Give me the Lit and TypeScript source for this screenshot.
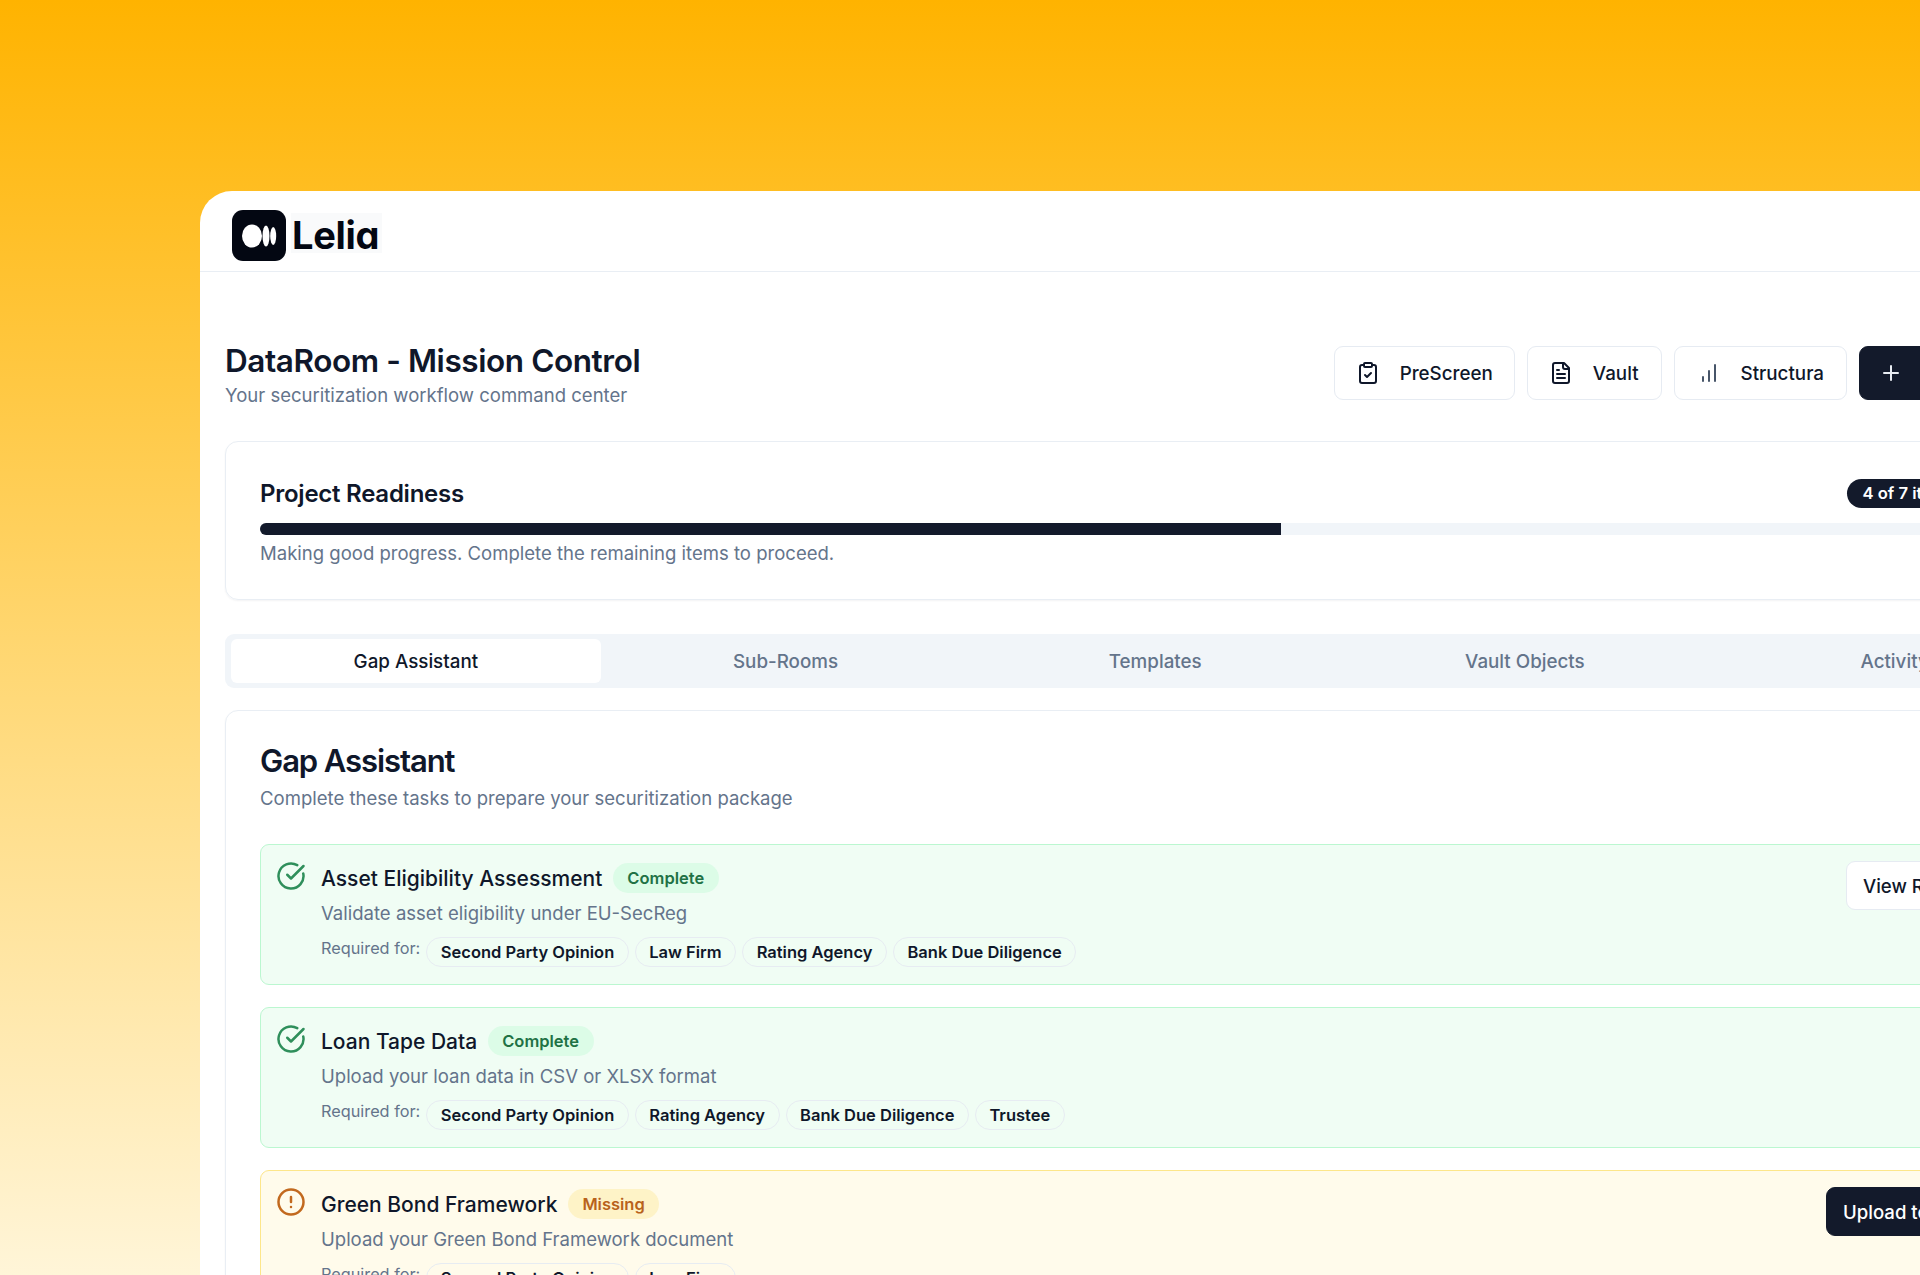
import { LitElement, html, css, svg } from 'lit';
import { customElement } from 'lit/decorators.js';

type Task = {
  title: string;
  desc: string;
  status: 'complete' | 'missing';
  required: string[];
  action: string;
};

const TASKS: Task[] = [
  {
    title: 'Asset Eligibility Assessment',
    desc: 'Validate asset eligibility under EU-SecReg',
    status: 'complete',
    required: ['Second Party Opinion', 'Law Firm', 'Rating Agency', 'Bank Due Diligence'],
    action: 'View Results',
  },
  {
    title: 'Loan Tape Data',
    desc: 'Upload your loan data in CSV or XLSX format',
    status: 'complete',
    required: ['Second Party Opinion', 'Rating Agency', 'Bank Due Diligence', 'Trustee'],
    action: '',
  },
  {
    title: 'Green Bond Framework',
    desc: 'Upload your Green Bond Framework document',
    status: 'missing',
    required: ['Second Party Opinion', 'Law Firm'],
    action: 'Upload to DataRoom',
  },
];

const TABS = ['Gap Assistant', 'Sub-Rooms', 'Templates', 'Vault Objects', 'Activity'];

const icon = (body: unknown) => html`
  <svg class="icon" viewBox="0 0 24 24" fill="none" stroke="currentColor" stroke-width="2"
    stroke-linecap="round" stroke-linejoin="round">${body}</svg>
`;

const clipboardCheck = svg`
  <rect x="8" y="2" width="8" height="4" rx="1"></rect>
  <path d="M16 4h2a2 2 0 0 1 2 2v14a2 2 0 0 1-2 2H6a2 2 0 0 1-2-2V6a2 2 0 0 1 2-2h2"></path>
  <path d="m9 14 2 2 4-4"></path>`;
const fileText = svg`
  <path d="M15 2H6a2 2 0 0 0-2 2v16a2 2 0 0 0 2 2h12a2 2 0 0 0 2-2V7Z"></path>
  <path d="M14 2v4a2 2 0 0 0 2 2h4"></path>
  <path d="M10 9H8"></path><path d="M16 13H8"></path><path d="M16 17H8"></path>`;
const barChart = svg`
  <line x1="18" x2="18" y1="20" y2="4"></line>
  <line x1="12" x2="12" y1="20" y2="10"></line>
  <line x1="6" x2="6" y1="20" y2="16"></line>`;
const plus = svg`<path d="M5 12h14"></path><path d="M12 5v14"></path>`;
const circleCheck = svg`
  <path d="M21.801 10A10 10 0 1 1 17 3.335"></path><path d="m9 11 3 3L22 4"></path>`;
const circleAlert = svg`
  <circle cx="12" cy="12" r="10"></circle>
  <line x1="12" x2="12" y1="8" y2="12"></line>
  <line x1="12" x2="12.01" y1="16" y2="16"></line>`;

@customElement('app-root')
export class AppRoot extends LitElement {
  static styles = css`
    :host {
      display: block;
      width: 1920px;
      height: 1275px;
      overflow: hidden;
      padding: 191px 0 0 200px;
      box-sizing: border-box;
      background: linear-gradient(180deg, #ffb300 0%, #ffd66f 50%, #fff5d8 100%);
      font-family: Inter, 'Noto Sans', sans-serif;
      color: #0f172a;
    }

    .window {
      width: 1906px;
      height: 1084px;
      overflow: hidden;
      background: #fff;
      border-radius: 32px 0 0 0;
    }

    .topbar {
      height: 81px;
      box-sizing: border-box;
      border-bottom: 1px solid #e9eef4;
      padding: 19px 0 0 32px;
      display: flex;
      gap: 5px;
    }

    .logo-mark {
      width: 54px;
      height: 51px;
      display: block;
    }

    .logo-word {
      margin-top: 3px;
      height: 40px;
      padding: 0 3px 0 1px;
      background: #f9fafb;
      font-size: 38px;
      line-height: 44px;
      font-weight: 700;
      letter-spacing: -0.3px;
      color: #030712;
      font-feature-settings: 'cv11' 1;
    }

    main {
      padding: 71px 25px 0;
    }

    .page-head {
      display: flex;
      justify-content: space-between;
      align-items: center;
    }

    h1 {
      margin: 0;
      font-size: 31.5px;
      line-height: 36px;
      font-weight: 600;
      letter-spacing: -0.42px;
    }

    .muted {
      color: #64748b;
      font-size: 18.55px;
      line-height: 26px;
    }

    .page-head .muted {
      margin-top: 3px;
    }

    .head-actions {
      display: flex;
      gap: 12px;
      margin-bottom: 5px;
    }

    .btn {
      display: flex;
      align-items: center;
      box-sizing: border-box;
      height: 54px;
      padding: 0 22px 0 21px;
      gap: 20px;
      background: #fff;
      border: 1px solid #e6ebf2;
      border-radius: 9px;
      font: inherit;
      font-size: 18.8px;
      font-weight: 500;
      color: #0f172a;
      white-space: nowrap;
    }

    .btn .icon {
      width: 24px;
      height: 24px;
      flex: none;
    }

    .btn.screen {
      padding-right: 21px;
    }

    .btn.chart {
      padding-left: 22px;
    }

    .btn.chart .icon {
      color: #475569;
    }

    .btn.dark {
      width: 222px;
      padding-left: 19px;
      background: #131a2b;
      border-color: #131a2b;
      color: #e8ecf2;
    }

    .card {
      border: 1px solid #e9eef4;
      border-radius: 13px;
      box-shadow: 0 1px 2px rgba(15, 23, 42, 0.05);
      padding: 34px;
    }

    .readiness {
      margin-top: 33px;
      height: 159px;
      box-sizing: border-box;
    }

    .readiness-head {
      display: flex;
      justify-content: space-between;
      align-items: center;
      height: 34px;
    }

    h2 {
      margin: 0;
      font-size: 24px;
      font-weight: 600;
      letter-spacing: -0.25px;
    }

    .count {
      background: #131a2b;
      color: #fff;
      height: 29px;
      line-height: 29px;
      padding: 0 11px 0 15px;
      border-radius: 15px;
      font-size: 16.6px;
      font-weight: 600;
    }

    .track {
      margin-top: 13px;
      height: 12px;
      background: #f1f5f9;
      border-radius: 6px;
      overflow: hidden;
    }

    .fill {
      height: 100%;
      background: #131a2b;
    }

    .readiness .muted {
      margin-top: 5px;
      line-height: 27px;
    }

    .tabs {
      margin-top: 34px;
      display: grid;
      grid-template-columns: repeat(5, 369.7px);
      padding: 5px 5px 5px 6px;
      height: 54px;
      box-sizing: border-box;
      background: #f1f5f9;
      border-radius: 9px;
      overflow: hidden;
    }

    .tab {
      display: flex;
      align-items: center;
      justify-content: center;
      font-size: 18.8px;
      font-weight: 500;
      color: #64748b;
      border-radius: 6px;
    }

    .tab.active {
      background: #fff;
      color: #0f172a;
    }

    .gap {
      margin-top: 22px;
      height: 700px;
      box-sizing: border-box;
    }

    .gap h2 {
      margin-top: 1px;
      font-size: 31px;
      line-height: 30px;
      letter-spacing: -1.08px;
    }

    .gap > .muted {
      margin-top: 9px;
    }

    .tasks {
      margin-top: 33px;
      display: flex;
      flex-direction: column;
      gap: 22px;
    }

    .task {
      display: flex;
      align-items: flex-start;
      gap: 15px;
      padding: 16px 16px 17px 15px;
      border: 1px solid #bbf7d0;
      border-radius: 9px;
      background: #f0fdf4;
    }

    .task.missing {
      border-color: #fde68a;
      background: #fffbeb;
    }

    .task-icon {
      width: 30px;
      height: 30px;
      flex: none;
      color: #2f8f5b;
    }

    .task.missing .task-icon {
      color: #c2691e;
    }

    .task-body {
      flex: 1;
      padding-top: 2px;
    }

    .task-title {
      display: flex;
      align-items: center;
      gap: 10.5px;
      height: 30px;
      font-size: 21px;
      font-weight: 500;
    }

    .status {
      height: 30px;
      line-height: 30px;
      padding: 0 14.5px;
      border-radius: 15px;
      background: #dcfce7;
      color: #1f7245;
      font-size: 16.5px;
      font-weight: 600;
    }

    .missing .status {
      background: #fef3c7;
      color: #b8621b;
    }

    .task-body > .muted {
      margin-top: 7px;
    }

    .req {
      margin-top: 11px;
      display: flex;
      gap: 6px;
    }

    .req-label {
      color: #64748b;
      font-size: 16.3px;
      line-height: 22px;
    }

    .pill {
      height: 30px;
      box-sizing: border-box;
      line-height: 28px;
      padding: 0 13.5px;
      border: 1px solid #e7ecf2;
      border-radius: 15px;
      font-size: 16.5px;
      font-weight: 600;
      white-space: nowrap;
    }

    .task-btn {
      flex: none;
      height: 49px;
      padding: 0 16px;
      font-size: 18.6px;
    }

    .task-btn.view {
      width: 183px;
    }

    .task-btn.upload {
      width: 203px;
      background: #131a2b;
      border-color: #131a2b;
      color: #fff;
    }
  `;

  render() {
    return html`
      <div class="window">
        <header class="topbar">
          <svg class="logo-mark" viewBox="0 0 54 51">
            <rect width="54" height="51" rx="11" fill="#030712"></rect>
            <ellipse cx="20" cy="26" rx="10" ry="11.5" fill="#fff"></ellipse>
            <ellipse cx="34" cy="26" rx="3.5" ry="10.5" fill="#fff"></ellipse>
            <ellipse cx="41.2" cy="26" rx="3" ry="9" fill="#fff"></ellipse>
          </svg>
          <div class="logo-word">Lelia</div>
        </header>
        <main>
          <section class="page-head">
            <div>
              <h1>DataRoom - Mission Control</h1>
              <div class="muted">Your securitization workflow command center</div>
            </div>
            <div class="head-actions">
              <button class="btn screen">${icon(clipboardCheck)}PreScreen</button>
              <button class="btn">${icon(fileText)}Vault</button>
              <button class="btn chart">${icon(barChart)}Structura</button>
              <button class="btn dark">${icon(plus)}</button>
            </div>
          </section>

          <section class="card readiness">
            <div class="readiness-head">
              <h2>Project Readiness</h2>
              <span class="count">4 of 7 items complete</span>
            </div>
            <div class="track"><div class="fill" style="width: ${(4 / 7) * 100}%"></div></div>
            <div class="muted">Making good progress. Complete the remaining items to proceed.</div>
          </section>

          <nav class="tabs">
            ${TABS.map((t, i) => html`<div class="tab ${i === 0 ? 'active' : ''}">${t}</div>`)}
          </nav>

          <section class="card gap">
            <h2>Gap Assistant</h2>
            <div class="muted">Complete these tasks to prepare your securitization package</div>
            <div class="tasks">
              ${TASKS.map((t) => this.renderTask(t))}
            </div>
          </section>
        </main>
      </div>
    `;
  }

  private renderTask(t: Task) {
    const done = t.status === 'complete';
    return html`
      <article class="task ${t.status}">
        <svg class="task-icon" viewBox="0 0 24 24" fill="none" stroke="currentColor" stroke-width="2"
          stroke-linecap="round" stroke-linejoin="round">${done ? circleCheck : circleAlert}</svg>
        <div class="task-body">
          <div class="task-title">
            ${t.title}
            <span class="status">${done ? 'Complete' : 'Missing'}</span>
          </div>
          <div class="muted">${t.desc}</div>
          <div class="req">
            <span class="req-label">Required for:</span>
            ${t.required.map((r) => html`<span class="pill">${r}</span>`)}
          </div>
        </div>
        ${t.action
          ? html`<button class="btn task-btn ${done ? 'view' : 'upload'}">${t.action}</button>`
          : ''}
      </article>
    `;
  }
}
